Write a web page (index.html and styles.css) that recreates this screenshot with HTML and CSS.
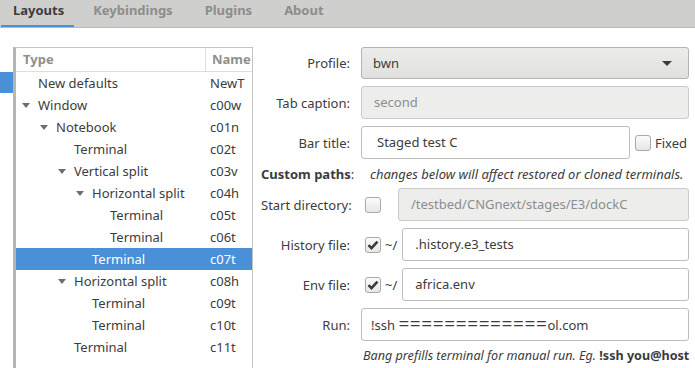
FILE: index.html
```html
<!DOCTYPE html>
<html lang="en">
<head>
    <meta charset="UTF-8">
    <meta name="viewport" content="width=device-width, initial-scale=1.0">
    <title>Layouts</title>
    <link rel="stylesheet" href="styles.css">
</head>
<body>
    <div class="tabs">
        <div class="tab active">Layouts</div>
        <div class="tab">Keybindings</div>
        <div class="tab">Plugins</div>
        <div class="tab">About</div>
    </div>
    <div class="main">
        <div class="side"><div class="side-sel"></div></div>
        <div class="tree">
            <div class="tree-head">
                <div class="col-type">Type</div>
                <div class="col-name">Name</div>
            </div>
            <div class="row"><div class="cell-type lvl0"><span class="exp"></span>New defaults</div><div class="cell-name">NewT</div></div>
            <div class="row"><div class="cell-type lvl0"><span class="exp"><svg width="8" height="5" viewBox="0 0 8 5"><path d="M0 0h8L4 5z"/></svg></span>Window</div><div class="cell-name">c00w</div></div>
            <div class="row"><div class="cell-type lvl1"><span class="exp"><svg width="8" height="5" viewBox="0 0 8 5"><path d="M0 0h8L4 5z"/></svg></span>Notebook</div><div class="cell-name">c01n</div></div>
            <div class="row"><div class="cell-type lvl2"><span class="exp"></span>Terminal</div><div class="cell-name">c02t</div></div>
            <div class="row"><div class="cell-type lvl2"><span class="exp"><svg width="8" height="5" viewBox="0 0 8 5"><path d="M0 0h8L4 5z"/></svg></span>Vertical split</div><div class="cell-name">c03v</div></div>
            <div class="row"><div class="cell-type lvl3"><span class="exp"><svg width="8" height="5" viewBox="0 0 8 5"><path d="M0 0h8L4 5z"/></svg></span>Horizontal split</div><div class="cell-name">c04h</div></div>
            <div class="row"><div class="cell-type lvl4"><span class="exp"></span>Terminal</div><div class="cell-name">c05t</div></div>
            <div class="row"><div class="cell-type lvl4"><span class="exp"></span>Terminal</div><div class="cell-name">c06t</div></div>
            <div class="row selected"><div class="cell-type lvl3"><span class="exp"></span>Terminal</div><div class="cell-name">c07t</div></div>
            <div class="row"><div class="cell-type lvl2"><span class="exp"><svg width="8" height="5" viewBox="0 0 8 5"><path d="M0 0h8L4 5z"/></svg></span>Horizontal split</div><div class="cell-name">c08h</div></div>
            <div class="row"><div class="cell-type lvl3"><span class="exp"></span>Terminal</div><div class="cell-name">c09t</div></div>
            <div class="row"><div class="cell-type lvl3"><span class="exp"></span>Terminal</div><div class="cell-name">c10t</div></div>
            <div class="row"><div class="cell-type lvl2"><span class="exp"></span>Terminal</div><div class="cell-name">c11t</div></div>
        </div>
        <div class="form">
            <div class="frow">
                <div class="lbl">Profile:</div>
                <div class="combo">bwn<svg class="combo-arrow" width="10" height="5" viewBox="0 0 10 5"><path d="M0 0h10L5 5z"/></svg></div>
            </div>
            <div class="frow">
                <div class="lbl">Tab caption:</div>
                <div class="entry off">second</div>
            </div>
            <div class="frow">
                <div class="lbl">Bar title:</div>
                <div class="entry bar-title">Staged test C</div>
                <span class="check"></span>
                <span class="check-label">Fixed</span>
            </div>
            <div class="frow short">
                <div class="lbl left"><b>Custom paths</b>:</div>
                <div class="note">changes below will affect restored or cloned terminals.</div>
            </div>
            <div class="frow">
                <div class="lbl">Start directory:</div>
                <span class="check lone"></span>
                <div class="entry off dir">/testbed/CNGnext/stages/E3/dockC</div>
            </div>
            <div class="frow">
                <div class="lbl">History file:</div>
                <span class="check on lone"><svg width="16" height="16" viewBox="0 0 16 16"><path d="M3.5 8.2l3 3 6-6.5"/></svg></span>
                <span class="home">~/</span>
                <div class="entry path">.history.e3_tests</div>
            </div>
            <div class="frow">
                <div class="lbl">Env file:</div>
                <span class="check on lone"><svg width="16" height="16" viewBox="0 0 16 16"><path d="M3.5 8.2l3 3 6-6.5"/></svg></span>
                <span class="home">~/</span>
                <div class="entry path">africa.env</div>
            </div>
            <div class="frow">
                <div class="lbl">Run:</div>
                <div class="entry run">!ssh <span class="mask">=============</span>ol.com</div>
            </div>
            <div class="help"><i>Bang prefills terminal for manual run. Eg.</i> <b>!ssh you@host</b></div>
        </div>
    </div>
</body>
</html>
```

FILE: styles.css
```css
body {
    margin: 0;
    padding: 0;
    background-color: white;
    font-family: "Noto Sans", sans-serif;
    font-size: 13px;
    color: #3c3c3c;
    overflow: hidden;
}
.tabs {
    display: flex;
    height: 27px;
    background-color: #cfcfcd;
    border-bottom: 1px solid #b8b8b5;
}
.tab {
    padding: 0 16px;
    line-height: 20px;
    height: 25px;
    font-weight: bold;
    color: #8d8d8b;
    border-bottom: 2px solid transparent;
}
.tab:first-child {
    padding-left: 12px;
    padding-right: 10px;
    margin-left: 1px;
}
.tab:nth-child(2) {
    padding-left: 19px;
}
.tab.active {
    color: #3c3c3c;
    border-bottom-color: #4a90d9;
}
.main {
    display: flex;
    padding-top: 19px;
    height: 321px;
}
.side {
    flex-shrink: 0;
    width: 13px;
    padding-top: 25px;
}
.side-sel {
    height: 21px;
    background-color: #4a90d9;
}
.tree {
    flex-shrink: 0;
    width: 236px;
    border-left: 3px solid #b6b6b2;
    border-right: 1px solid #c4c4c1;
    border-top: 1px solid #c4c4c1;
}
.tree-head {
    display: flex;
    height: 23px;
    border-bottom: 1px solid #dededc;
    font-weight: bold;
    color: #8f8f8d;
    line-height: 23px;
}
.col-type {
    width: 182px;
    padding-left: 7px;
    border-right: 1px solid #dededc;
}
.col-name {
    padding-left: 6px;
}
.row {
    display: flex;
    height: 22px;
    line-height: 22px;
}
.row.selected {
    background-color: #4a90d9;
    color: white;
}
.cell-type {
    display: flex;
    align-items: center;
    box-sizing: border-box;
    width: 189px;
    flex-shrink: 0;
    white-space: nowrap;
}
.cell-name {
    padding-left: 5px;
}
.exp {
    display: inline-flex;
    align-items: center;
    width: 16px;
    flex-shrink: 0;
}
.exp svg {
    fill: #6e6e6e;
}
.lvl0 { padding-left: 6px; }
.lvl1 { padding-left: 24px; }
.lvl2 { padding-left: 42px; }
.lvl3 { padding-left: 60px; }
.lvl4 { padding-left: 78px; }
.form {
    flex: 1;
    display: flex;
    flex-direction: column;
    gap: 7px;
    padding-left: 8px;
    padding-right: 6px;
}
.frow {
    display: flex;
    align-items: center;
    height: 33px;
}
.frow:first-child {
    height: 32px;
}
.frow.short {
    height: 15px;
}
.lbl {
    width: 89px;
    flex-shrink: 0;
    text-align: right;
    margin-right: 11px;
    white-space: nowrap;
}
.lbl.left {
    text-align: left;
}
.combo {
    flex: 1;
    height: 30px;
    display: flex;
    align-items: center;
    justify-content: space-between;
    padding: 0 16px 0 11px;
    border: 1px solid #b3b3b0;
    border-radius: 3px;
    background: linear-gradient(#ececeb, #e0e0de);
}
.combo-arrow {
    fill: #3c3c3c;
}
.entry {
    flex: 1;
    height: 31px;
    line-height: 31px;
    padding-left: 12px;
    border: 1px solid #bdbdba;
    border-radius: 3px;
    background-color: white;
    white-space: nowrap;
    overflow: hidden;
}
.entry.off {
    background-color: #ededec;
    border-color: #cbcbc8;
    color: #8b8e8f;
}
.entry.bar-title {
    flex: 0 0 252px;
    padding-left: 15px;
}
.entry.run {
    padding-left: 9px;
}
.mask {
    font-size: 19px;
    letter-spacing: 0.6px;
    vertical-align: -1px;
}
.check {
    width: 14px;
    height: 14px;
    margin-left: 5px;
    border: 1px solid #a9a9a6;
    border-radius: 3px;
    background: linear-gradient(#fbfbfb, #e6e6e4);
    flex-shrink: 0;
}
.check svg {
    display: block;
    margin: -1px;
    fill: none;
    stroke: #3c3c3c;
    stroke-width: 2.6;
}
.check.lone {
    margin-left: 4px;
}
.check-label {
    margin-left: 4px;
}
.entry.dir {
    margin-left: 17px;
}
.home {
    margin-left: 4px;
    margin-right: 5px;
}
.note {
    margin-left: 9px;
    font-style: italic;
    white-space: nowrap;
}
.help {
    padding-left: 102px;
    font-size: 12.6px;
    white-space: nowrap;
    line-height: 16px;
}
```
